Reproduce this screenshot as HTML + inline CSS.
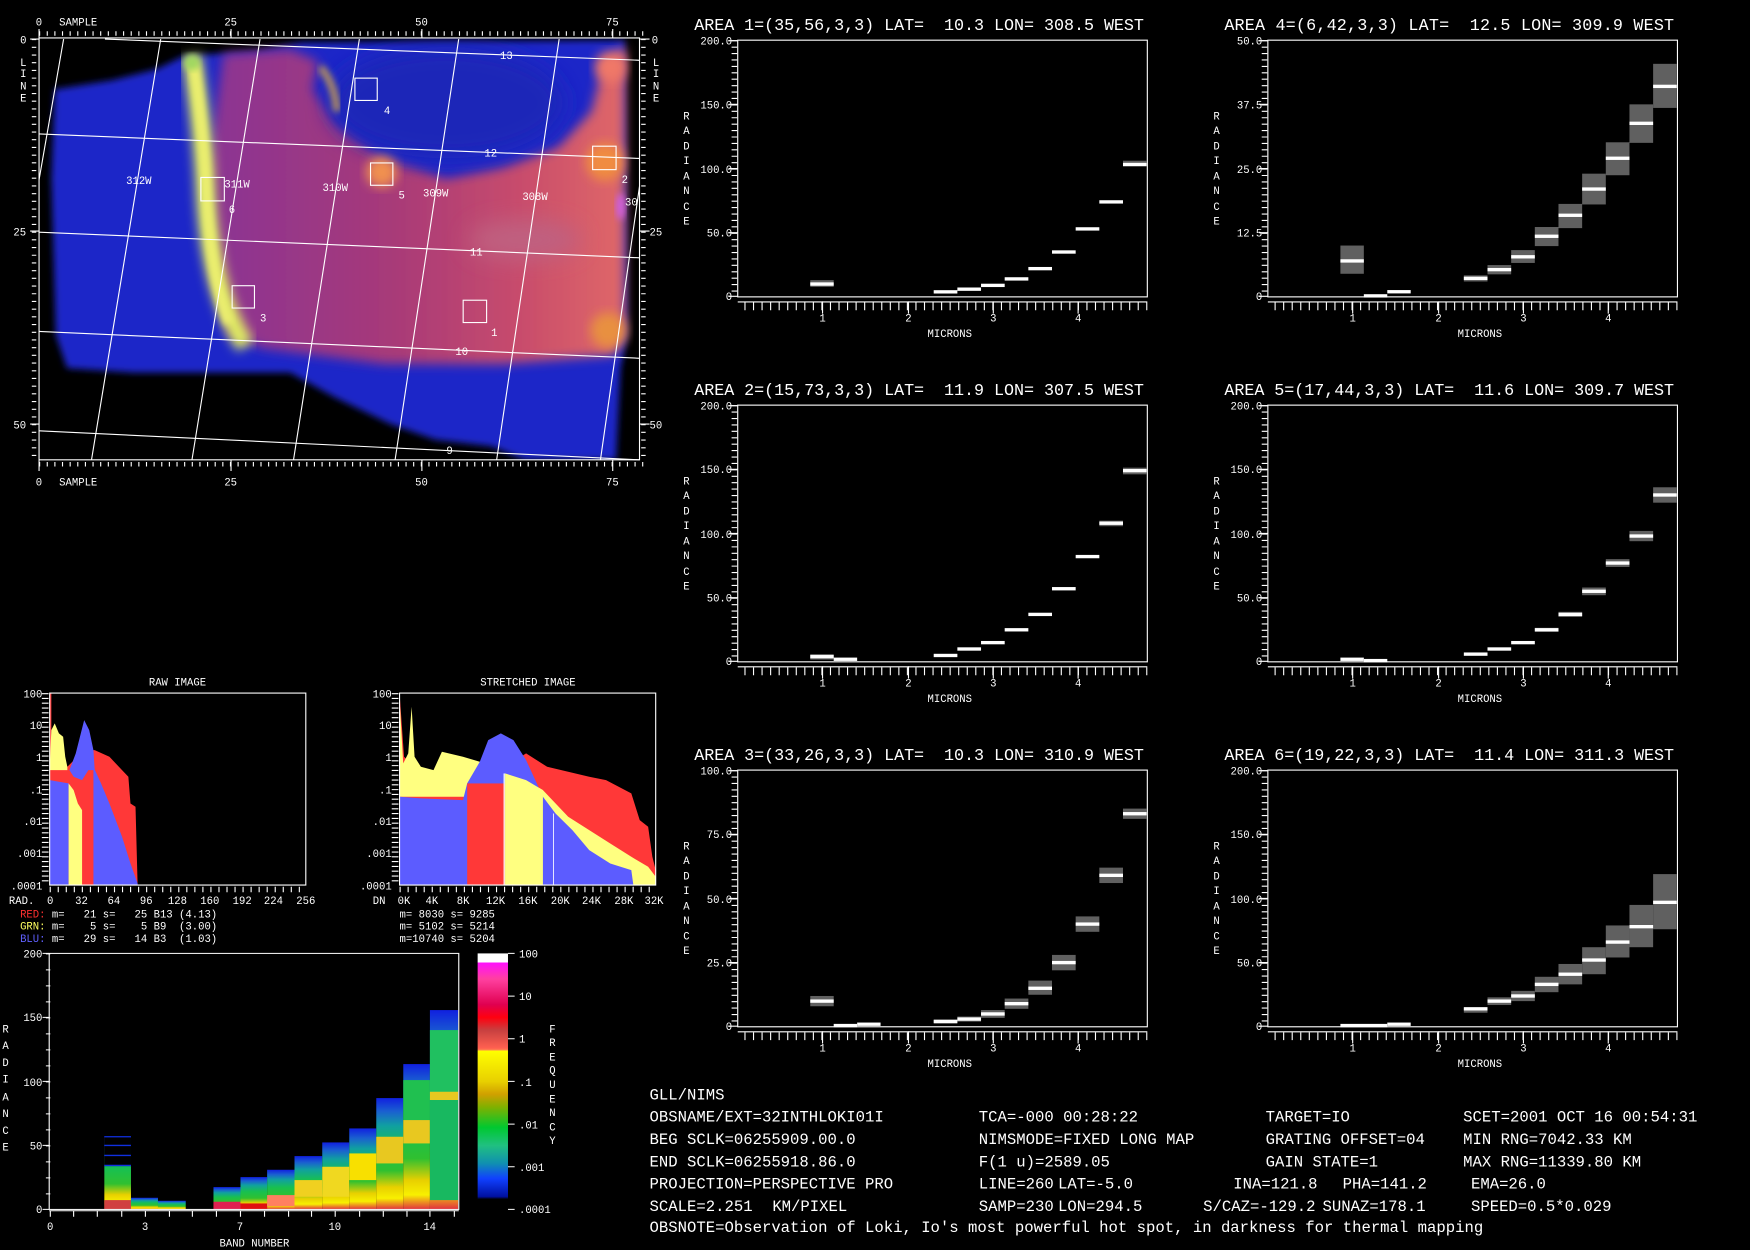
<!DOCTYPE html>
<html><head><meta charset="utf-8"><style>
html,body{margin:0;padding:0;background:#000;width:1750px;height:1250px;overflow:hidden}
svg{display:block}
text{font-family:"Liberation Mono",monospace;fill:#fff;white-space:pre}
</style></head><body>
<svg width="1750" height="1250" viewBox="0 0 1568 1120" xmlns="http://www.w3.org/2000/svg" xml:space="preserve">
<defs>
<filter id="b3" x="-20%" y="-20%" width="140%" height="140%"><feGaussianBlur stdDeviation="3"/></filter>
<filter id="b5" x="-20%" y="-20%" width="140%" height="140%"><feGaussianBlur stdDeviation="5"/></filter>
<filter id="b10" x="-50%" y="-50%" width="200%" height="200%"><feGaussianBlur stdDeviation="10"/></filter>
<clipPath id="mapclip"><rect x="35" y="34" width="538" height="378"/></clipPath>
<linearGradient id="pinkg" x1="0" x2="1" y1="0" y2="0">
<stop offset="0" stop-color="#8a3494"/><stop offset="0.45" stop-color="#a83a78"/><stop offset="0.75" stop-color="#c84c6c"/><stop offset="1" stop-color="#e06868"/></linearGradient>
<linearGradient id="colg" x1="0" x2="0" y1="0" y2="1">
<stop offset="0" stop-color="#1020e0"/><stop offset="0.12" stop-color="#1a60d0"/><stop offset="0.25" stop-color="#10a0a0"/>
<stop offset="0.45" stop-color="#18c050"/><stop offset="0.65" stop-color="#30c030"/><stop offset="0.8" stop-color="#e8d000"/>
<stop offset="0.9" stop-color="#f8f000"/><stop offset="1" stop-color="#e03040"/></linearGradient>
<linearGradient id="barg" x1="0" x2="0" y1="0" y2="1">
<stop offset="0" stop-color="#ffffff"/><stop offset="0.035" stop-color="#ffffff"/><stop offset="0.035" stop-color="#ff10ff"/>
<stop offset="0.1" stop-color="#ff40a0"/><stop offset="0.2" stop-color="#e00050"/><stop offset="0.25" stop-color="#ff0010"/>
<stop offset="0.3" stop-color="#c84040"/><stop offset="0.37" stop-color="#ff6050"/><stop offset="0.38" stop-color="#ff9050"/>
<stop offset="0.38" stop-color="#ffff00"/><stop offset="0.5" stop-color="#e8d000"/><stop offset="0.55" stop-color="#d0a000"/>
<stop offset="0.6" stop-color="#80b000"/><stop offset="0.68" stop-color="#00c830"/><stop offset="0.75" stop-color="#20c080"/>
<stop offset="0.82" stop-color="#1090b0"/><stop offset="0.88" stop-color="#1040ff"/><stop offset="0.95" stop-color="#0010a0"/>
<stop offset="0.96" stop-color="#000000"/><stop offset="1" stop-color="#000000"/></linearGradient>
<g id="axes">
<rect x="0" y="0" width="367" height="230" fill="none" stroke="#fff" stroke-width="1"/>
<line x1="0" y1="234.5" x2="367" y2="234.5" stroke="#fff"/>
<line x1="0" y1="238.5" x2="367" y2="238.5" stroke="#fff" stroke-width="7" stroke-dasharray="1 6.66" stroke-dashoffset="-6"/>
<path d="M76,234v11M153,234v11M229,234v11M305,234v11" stroke="#fff"/>
<line x1="-3" y1="0" x2="-3" y2="230" stroke="#fff" stroke-width="5" stroke-dasharray="1 4.75"/>
<path d="M-8,0.5h8M-8,57.5h8M-8,115h8M-8,172.5h8M-8,229.5h8" stroke="#fff"/>
</g>
</defs>
<rect width="1568" height="1120" fill="#000"/>

<!-- MAP -->
<g clip-path="url(#mapclip)">
<polygon points="49,80 100,72 140,62 165,50 230,46 270,38 560,36 562,300 556,330 552,412 470,412 440,400 390,394 350,380 300,356 260,334 200,334 120,334 60,330 50,300 46,160" fill="#1a26c8" filter="url(#b3)"/>
<polygon points="200,48 260,44 285,55 280,80 300,110 340,140 400,160 450,150 500,132 530,100 540,60 560,40 560,300 550,318 450,326 344,326 235,312 205,300 192,250 186,150" fill="url(#pinkg)" filter="url(#b5)"/>
<ellipse cx="400" cy="92" rx="105" ry="50" fill="#1c28b8" filter="url(#b10)"/>
<ellipse cx="470" cy="215" rx="50" ry="18" fill="#c06080" filter="url(#b10)"/>
<path d="M172,50 Q182,120 184,170 Q188,260 220,310" stroke="#e0ee60" stroke-width="17" fill="none" filter="url(#b5)"/>
<path d="M174,60 Q183,120 185,170 Q189,250 205,290" stroke="#eef070" stroke-width="8" fill="none" filter="url(#b3)"/>
<circle cx="172" cy="56" r="7" fill="#a0d860" filter="url(#b3)"/>
<circle cx="342" cy="154" r="14" fill="#f09050" filter="url(#b5)"/>
<circle cx="542" cy="145" r="17" fill="#f08c40" filter="url(#b5)"/>
<circle cx="545" cy="296" r="16" fill="#e89040" filter="url(#b5)"/>
<circle cx="547" cy="60" r="14" fill="#f07868" filter="url(#b5)"/>
<ellipse cx="556" cy="185" rx="4" ry="12" fill="#d060e0" filter="url(#b3)"/>
<path d="M287,60 Q300,75 302,100" stroke="#b08c60" stroke-width="7" fill="none" filter="url(#b3)"/>
</g>
<g stroke="#fff" stroke-width="1" fill="none">
<rect x="35" y="34" width="538" height="378"/>
<line x1="94" y1="35" x2="573" y2="54"/>
<line x1="35" y1="120" x2="573" y2="142"/>
<line x1="35" y1="208" x2="573" y2="231"/>
<line x1="35" y1="297" x2="573" y2="321"/>
<line x1="35" y1="386" x2="573" y2="412"/>
<line x1="57" y1="35" x2="35" y2="161"/>
<line x1="144" y1="35" x2="82" y2="412"/>
<line x1="233" y1="35" x2="172" y2="412"/>
<line x1="322" y1="35" x2="263" y2="412"/>
<line x1="411" y1="35" x2="354" y2="412"/>
<line x1="501" y1="35" x2="445" y2="412"/>
<line x1="573" y1="167" x2="538" y2="412"/>
<rect x="318" y="70" width="20" height="20"/>
<rect x="332" y="146" width="20" height="20"/>
<rect x="180" y="159" width="21" height="21"/>
<rect x="531" y="131" width="21" height="21"/>
<rect x="208" y="256" width="20" height="20"/>
<rect x="415" y="269" width="21" height="20"/>
<line x1="35" y1="30" x2="580" y2="30" stroke-width="4" stroke-dasharray="1 5.84"/>
<line x1="35" y1="416" x2="580" y2="416" stroke-width="4" stroke-dasharray="1 5.84"/>
<line x1="30.5" y1="35" x2="30.5" y2="412" stroke-width="4" stroke-dasharray="1 5.9"/>
<line x1="576.5" y1="35" x2="576.5" y2="412" stroke-width="4" stroke-dasharray="1 5.9"/>
<path d="M35,26v8M207,26v8M378,26v8M549,26v8M35,412v10M207,412v10M378,412v10M549,412v10M27,35h8M27,207h8M27,380h8M573,35h9M573,207h9M573,380h9"/>
</g>
<g font-size="9.5">
<text x="32" y="23">0</text><text x="53" y="23">SAMPLE</text>
<text x="201" y="23">25</text><text x="372" y="23">50</text><text x="543" y="23">75</text>
<text x="32" y="435">0</text><text x="53" y="435">SAMPLE</text>
<text x="201" y="435">25</text><text x="372" y="435">50</text><text x="543" y="435">75</text>
<text x="18" y="39">0</text><text x="12" y="211">25</text><text x="12" y="384">50</text>
<text x="18" y="59">L</text><text x="18" y="69">I</text><text x="18" y="80">N</text><text x="18" y="91">E</text>
<text x="584" y="39">0</text><text x="582" y="211">25</text><text x="582" y="384">50</text>
<text x="585" y="59">L</text><text x="585" y="69">I</text><text x="585" y="80">N</text><text x="585" y="91">E</text>
<text x="448" y="53">13</text><text x="434" y="140">12</text><text x="421" y="229">11</text><text x="408" y="318">10</text><text x="400" y="407">9</text>
<text x="113" y="165">312W</text><text x="201" y="168">311W</text><text x="289" y="171">310W</text><text x="379" y="176">309W</text><text x="468" y="179">308W</text><text x="560" y="184">30</text>
<text x="344" y="102">4</text><text x="357" y="178">5</text><text x="205" y="191">6</text><text x="557" y="164">2</text><text x="233" y="288">3</text><text x="440" y="301">1</text>
</g>

<!-- plot 1 -->
<g transform="translate(661,36)">
<use href="#axes"/>
<text x="-39" y="-9" font-size="15" textLength="403">AREA 1=(35,56,3,3) LAT=  10.3 LON= 308.5 WEST</text>
<g font-size="9.5" text-anchor="end"><text x="-5" y="4">200.0</text><text x="-5" y="61">150.0</text><text x="-5" y="119">100.0</text><text x="-5" y="176">50.0</text><text x="-5" y="233">0</text></g>
<g font-size="9.5" text-anchor="middle"><text x="76" y="252">1</text><text x="153" y="252">2</text><text x="229" y="252">3</text><text x="305" y="252">4</text><text x="190" y="266">MICRONS</text>
<text x="-46" y="71">R</text><text x="-46" y="84">A</text><text x="-46" y="98">D</text><text x="-46" y="111">I</text><text x="-46" y="125">A</text><text x="-46" y="138">N</text><text x="-46" y="152">C</text><text x="-46" y="165">E</text></g>
<g fill="#606060"><rect x="65" y="215" width="21" height="6"/><rect x="345.2" y="108" width="21.2" height="5"/></g>
<g fill="#fff"><rect x="65" y="217" width="21" height="3"/><rect x="175.6" y="224" width="21.2" height="3"/><rect x="196.8" y="221.6" width="21.2" height="3"/><rect x="218" y="218.2" width="21.2" height="3"/><rect x="239.2" y="212.4" width="21.2" height="3"/><rect x="260.4" y="203.2" width="21.2" height="3"/><rect x="281.6" y="188.3" width="21.2" height="3"/><rect x="302.8" y="167.6" width="21.2" height="3"/><rect x="324" y="143.4" width="21.2" height="3"/><rect x="345.2" y="109.9" width="21.2" height="3"/></g>
</g>
<!-- plot 2 -->
<g transform="translate(661,363)">
<use href="#axes"/>
<text x="-39" y="-9" font-size="15" textLength="403">AREA 2=(15,73,3,3) LAT=  11.9 LON= 307.5 WEST</text>
<g font-size="9.5" text-anchor="end"><text x="-5" y="4">200.0</text><text x="-5" y="61">150.0</text><text x="-5" y="119">100.0</text><text x="-5" y="176">50.0</text><text x="-5" y="233">0</text></g>
<g font-size="9.5" text-anchor="middle"><text x="76" y="252">1</text><text x="153" y="252">2</text><text x="229" y="252">3</text><text x="305" y="252">4</text><text x="190" y="266">MICRONS</text>
<text x="-46" y="71">R</text><text x="-46" y="84">A</text><text x="-46" y="98">D</text><text x="-46" y="111">I</text><text x="-46" y="125">A</text><text x="-46" y="138">N</text><text x="-46" y="152">C</text><text x="-46" y="165">E</text></g>
<g fill="#606060"><rect x="65" y="223" width="21" height="5"/><rect x="324" y="103.5" width="21.2" height="5"/><rect x="345.2" y="56" width="21.2" height="6"/></g>
<g fill="#fff"><rect x="65" y="223.9" width="21" height="3"/><rect x="86" y="226.2" width="21" height="3"/><rect x="175.6" y="222.8" width="21.2" height="3"/><rect x="196.8" y="217" width="21.2" height="3"/><rect x="218" y="211.3" width="21.2" height="3"/><rect x="239.2" y="199.8" width="21.2" height="3"/><rect x="260.4" y="186" width="21.2" height="3"/><rect x="281.6" y="163" width="21.2" height="3"/><rect x="302.8" y="134.2" width="21.2" height="3"/><rect x="324" y="104.3" width="21.2" height="3"/><rect x="345.2" y="57.2" width="21.2" height="3"/></g>
</g>
<!-- plot 3 -->
<g transform="translate(661,690)">
<use href="#axes"/>
<text x="-39" y="-9" font-size="15" textLength="403">AREA 3=(33,26,3,3) LAT=  10.3 LON= 310.9 WEST</text>
<g font-size="9.5" text-anchor="end"><text x="-5" y="4">100.0</text><text x="-5" y="61">75.0</text><text x="-5" y="119">50.0</text><text x="-5" y="176">25.0</text><text x="-5" y="233">0</text></g>
<g font-size="9.5" text-anchor="middle"><text x="76" y="252">1</text><text x="153" y="252">2</text><text x="229" y="252">3</text><text x="305" y="252">4</text><text x="190" y="266">MICRONS</text>
<text x="-46" y="71">R</text><text x="-46" y="84">A</text><text x="-46" y="98">D</text><text x="-46" y="111">I</text><text x="-46" y="125">A</text><text x="-46" y="138">N</text><text x="-46" y="152">C</text><text x="-46" y="165">E</text></g>
<g fill="#606060"><rect x="65" y="202.4" width="21" height="9.2"/><rect x="175.6" y="223.1" width="21.2" height="3.5"/><rect x="196.8" y="220.8" width="21.2" height="4.6"/><rect x="218" y="215" width="21.2" height="7"/><rect x="239.2" y="204.7" width="21.2" height="9.2"/><rect x="260.4" y="188.6" width="21.2" height="12.7"/><rect x="281.6" y="165.6" width="21.2" height="13.8"/><rect x="302.8" y="131.1" width="21.2" height="13.8"/><rect x="324" y="87.4" width="21.2" height="13.8"/><rect x="345.2" y="34.5" width="21.2" height="9.2"/></g>
<g fill="#fff"><rect x="65" y="205.5" width="21" height="3"/><rect x="86" y="227.4" width="21" height="3"/><rect x="107" y="226.2" width="21" height="3"/><rect x="175.6" y="223.9" width="21.2" height="3"/><rect x="196.8" y="221.6" width="21.2" height="3"/><rect x="218" y="217" width="21.2" height="3"/><rect x="239.2" y="207.8" width="21.2" height="3"/><rect x="260.4" y="194" width="21.2" height="3"/><rect x="281.6" y="171" width="21.2" height="3"/><rect x="302.8" y="136.5" width="21.2" height="3"/><rect x="324" y="92.8" width="21.2" height="3"/><rect x="345.2" y="37.6" width="21.2" height="3"/></g>
</g>
<!-- plot 4 -->
<g transform="translate(1136,36)">
<use href="#axes"/>
<text x="-39" y="-9" font-size="15" textLength="403">AREA 4=(6,42,3,3) LAT=  12.5 LON= 309.9 WEST</text>
<g font-size="9.5" text-anchor="end"><text x="-5" y="4">50.0</text><text x="-5" y="61">37.5</text><text x="-5" y="119">25.0</text><text x="-5" y="176">12.5</text><text x="-5" y="233">0</text></g>
<g font-size="9.5" text-anchor="middle"><text x="76" y="252">1</text><text x="153" y="252">2</text><text x="229" y="252">3</text><text x="305" y="252">4</text><text x="190" y="266">MICRONS</text>
<text x="-46" y="71">R</text><text x="-46" y="84">A</text><text x="-46" y="98">D</text><text x="-46" y="111">I</text><text x="-46" y="125">A</text><text x="-46" y="138">N</text><text x="-46" y="152">C</text><text x="-46" y="165">E</text></g>
<g fill="#606060"><rect x="65" y="184" width="21" height="25.3"/><rect x="175.6" y="210.7" width="21.2" height="5.5"/><rect x="196.8" y="201.5" width="21.2" height="8.3"/><rect x="218" y="188.1" width="21.2" height="11.5"/><rect x="239.2" y="167.4" width="21.2" height="17.1"/><rect x="260.4" y="146.7" width="21.2" height="21.7"/><rect x="281.6" y="119.6" width="21.2" height="27.6"/><rect x="302.8" y="91.5" width="21.2" height="29.5"/><rect x="324" y="57.5" width="21.2" height="34.5"/><rect x="345.2" y="21.2" width="21.2" height="39.5"/></g>
<g fill="#fff"><rect x="65" y="196.3" width="21" height="3"/><rect x="86" y="227.6" width="21" height="3"/><rect x="107" y="223.9" width="21" height="3"/><rect x="175.6" y="211.9" width="21.2" height="3"/><rect x="196.8" y="204.1" width="21.2" height="3"/><rect x="218" y="192.6" width="21.2" height="3"/><rect x="239.2" y="174.2" width="21.2" height="3"/><rect x="260.4" y="155.4" width="21.2" height="3"/><rect x="281.6" y="131.9" width="21.2" height="3"/><rect x="302.8" y="104.3" width="21.2" height="3"/><rect x="324" y="73" width="21.2" height="3"/><rect x="345.2" y="39.9" width="21.2" height="3"/></g>
</g>
<!-- plot 5 -->
<g transform="translate(1136,363)">
<use href="#axes"/>
<text x="-39" y="-9" font-size="15" textLength="403">AREA 5=(17,44,3,3) LAT=  11.6 LON= 309.7 WEST</text>
<g font-size="9.5" text-anchor="end"><text x="-5" y="4">200.0</text><text x="-5" y="61">150.0</text><text x="-5" y="119">100.0</text><text x="-5" y="176">50.0</text><text x="-5" y="233">0</text></g>
<g font-size="9.5" text-anchor="middle"><text x="76" y="252">1</text><text x="153" y="252">2</text><text x="229" y="252">3</text><text x="305" y="252">4</text><text x="190" y="266">MICRONS</text>
<text x="-46" y="71">R</text><text x="-46" y="84">A</text><text x="-46" y="98">D</text><text x="-46" y="111">I</text><text x="-46" y="125">A</text><text x="-46" y="138">N</text><text x="-46" y="152">C</text><text x="-46" y="165">E</text></g>
<g fill="#606060"><rect x="239.2" y="199.5" width="21.2" height="3.6"/><rect x="260.4" y="185.2" width="21.2" height="4.6"/><rect x="281.6" y="163.4" width="21.2" height="6.9"/><rect x="302.8" y="138" width="21.2" height="7"/><rect x="324" y="112.7" width="21.2" height="9.2"/><rect x="345.2" y="73.6" width="21.2" height="13.8"/></g>
<g fill="#fff"><rect x="65" y="226.2" width="21" height="3"/><rect x="86" y="227.4" width="21" height="3"/><rect x="175.6" y="221.6" width="21.2" height="3"/><rect x="196.8" y="217" width="21.2" height="3"/><rect x="218" y="211.3" width="21.2" height="3"/><rect x="239.2" y="199.8" width="21.2" height="3"/><rect x="260.4" y="186" width="21.2" height="3"/><rect x="281.6" y="165.3" width="21.2" height="3"/><rect x="302.8" y="140" width="21.2" height="3"/><rect x="324" y="115.8" width="21.2" height="3"/><rect x="345.2" y="79" width="21.2" height="3"/></g>
</g>
<!-- plot 6 -->
<g transform="translate(1136,690)">
<use href="#axes"/>
<text x="-39" y="-9" font-size="15" textLength="403">AREA 6=(19,22,3,3) LAT=  11.4 LON= 311.3 WEST</text>
<g font-size="9.5" text-anchor="end"><text x="-5" y="4">200.0</text><text x="-5" y="61">150.0</text><text x="-5" y="119">100.0</text><text x="-5" y="176">50.0</text><text x="-5" y="233">0</text></g>
<g font-size="9.5" text-anchor="middle"><text x="76" y="252">1</text><text x="153" y="252">2</text><text x="229" y="252">3</text><text x="305" y="252">4</text><text x="190" y="266">MICRONS</text>
<text x="-46" y="71">R</text><text x="-46" y="84">A</text><text x="-46" y="98">D</text><text x="-46" y="111">I</text><text x="-46" y="125">A</text><text x="-46" y="138">N</text><text x="-46" y="152">C</text><text x="-46" y="165">E</text></g>
<g fill="#606060"><rect x="175.6" y="212.8" width="21.2" height="4.6"/><rect x="196.8" y="203.6" width="21.2" height="6.9"/><rect x="218" y="197.8" width="21.2" height="9.2"/><rect x="239.2" y="185.2" width="21.2" height="13.8"/><rect x="260.4" y="173.7" width="21.2" height="18.3"/><rect x="281.6" y="158.7" width="21.2" height="24.2"/><rect x="302.8" y="139.2" width="21.2" height="28.7"/><rect x="324" y="120.8" width="21.2" height="37.9"/><rect x="345.2" y="93.2" width="21.2" height="49.4"/></g>
<g fill="#fff"><rect x="65" y="227.4" width="42" height="3"/><rect x="107" y="226.2" width="21" height="3"/><rect x="175.6" y="212.4" width="21.2" height="3"/><rect x="196.8" y="205.5" width="21.2" height="3"/><rect x="218" y="200.9" width="21.2" height="3"/><rect x="239.2" y="190.5" width="21.2" height="3"/><rect x="260.4" y="181.4" width="21.2" height="3"/><rect x="281.6" y="168.7" width="21.2" height="3"/><rect x="302.8" y="152.6" width="21.2" height="3"/><rect x="324" y="138.8" width="21.2" height="3"/><rect x="345.2" y="117" width="21.2" height="3"/></g>
</g>

<!-- HISTOGRAMS -->
<g transform="translate(0,600.4) scale(0.3771,0.2987)">
<polygon points="118,70 122,70 122,240 160,290 200,240 225,240 260,260 290,300 305,320 310,400 322,410 327,646 118,646" fill="#ff3838"/>
<polygon points="118,290 122,180 130,160 140,190 150,200 155,260 160,290 160,300 118,300" fill="#ffff80"/>
<polygon points="118,330 163,340 163,646 118,646" fill="#5c5cff"/>
<polygon points="163,340 175,360 185,400 195,420 195,646 163,646" fill="#ffff80"/>
<polygon points="165,300 180,250 200,150 212,180 222,240 225,300 210,300 195,330 175,320" fill="#5c5cff"/>
<polygon points="222,290 240,340 260,400 290,500 310,580 327,640 327,646 222,646" fill="#5c5cff"/>
<polygon points="950,80 960,260 1000,310 1050,330 1100,340 1140,300 1200,290 1250,250 1300,290 1400,320 1440,330 1500,370 1520,450 1540,470 1550,560 1558,600 1558,646 950,646" fill="#ff3838"/>
<polygon points="950,100 958,280 970,250 978,110 985,260 1000,290 1030,300 1050,245 1100,260 1140,275 1190,280 1250,330 1290,360 1350,440 1400,480 1450,520 1500,560 1540,590 1558,620 1558,646 1290,646 1290,380 950,380" fill="#ffff80"/>
<polygon points="950,380 1000,385 1100,390 1110,340 1140,275 1160,210 1190,190 1220,210 1250,270 1290,380 1320,430 1360,480 1400,540 1450,580 1500,600 1505,646 950,646" fill="#5c5cff"/>
<rect x="1110" y="340" width="90" height="306" fill="#ff3838"/>
<polygon points="1200,310 1250,330 1290,360 1290,646 1200,646" fill="#ffff80"/>
<line x1="1198" y1="310" x2="1198" y2="646" stroke="#fff" stroke-width="3"/>
<line x1="1315" y1="430" x2="1315" y2="646" stroke="#fff" stroke-width="2"/>
</g>
<g stroke="#fff" fill="none">
<rect x="44.5" y="621" width="229.5" height="172"/>
<rect x="358" y="621" width="229.5" height="172"/>
<line x1="44.5" y1="797" x2="274" y2="797" stroke-width="5" stroke-dasharray="1 6.2"/>
<line x1="358" y1="797" x2="588" y2="797" stroke-width="5" stroke-dasharray="1 6.2"/>
<line x1="40.5" y1="621" x2="40.5" y2="793" stroke-width="6" stroke-dasharray="1 3.3"/>
<line x1="354" y1="621" x2="354" y2="793" stroke-width="6" stroke-dasharray="1 3.3"/>
</g>
<g font-size="9.5">
<text x="159" y="614" text-anchor="middle">RAW IMAGE</text>
<text x="473" y="614" text-anchor="middle">STRETCHED IMAGE</text>
<g text-anchor="end"><text x="38" y="625">100</text><text x="38" y="653">10</text><text x="38" y="682">1</text><text x="38" y="711">.1</text><text x="38" y="739">.01</text><text x="38" y="768">.001</text><text x="38" y="797">.0001</text>
<text x="351" y="625">100</text><text x="351" y="653">10</text><text x="351" y="682">1</text><text x="351" y="711">.1</text><text x="351" y="739">.01</text><text x="351" y="768">.001</text><text x="351" y="797">.0001</text></g>
<text x="8" y="810">RAD.</text>
<g text-anchor="middle"><text x="45" y="810">0</text><text x="73" y="810">32</text><text x="102" y="810">64</text><text x="131" y="810">96</text><text x="159" y="810">128</text><text x="188" y="810">160</text><text x="217" y="810">192</text><text x="245" y="810">224</text><text x="274" y="810">256</text>
<text x="362" y="810">0K</text><text x="387" y="810">4K</text><text x="415" y="810">8K</text><text x="444" y="810">12K</text><text x="473" y="810">16K</text><text x="502" y="810">20K</text><text x="530" y="810">24K</text><text x="559" y="810">28K</text><text x="586" y="810">32K</text></g>
<text x="334" y="810">DN</text>
<text x="18" y="822"><tspan fill="#ff3030">RED:</tspan> m=   21 s=   25 B13 (4.13)</text>
<text x="18" y="833"><tspan fill="#ffff60">GRN:</tspan> m=    5 s=    5 B9  (3.00)</text>
<text x="18" y="844"><tspan fill="#6060ff">BLU:</tspan> m=   29 s=   14 B3  (1.03)</text>
<text x="358" y="822">m= 8030 s= 9285</text>
<text x="358" y="833">m= 5102 s= 5214</text>
<text x="358" y="844">m=10740 s= 5204</text>
</g>

<!-- BAND CHART -->
<g transform="translate(0,842.3) scale(0.3315,0.2987)">
<rect x="282" y="588" width="72" height="220" fill="url(#colg)"/>
<rect x="282" y="588" width="72" height="90" fill="#000"/>
<path d="M282,590h72M282,616h72M282,646h72M282,676h72" stroke="#1030e0" stroke-width="4"/>
<rect x="282" y="780" width="72" height="28" fill="#d04040"/>
<rect x="354" y="773" width="73" height="35" fill="url(#colg)"/>
<rect x="427" y="782" width="75" height="26" fill="url(#colg)"/>
<rect x="577" y="741" width="73" height="67" fill="url(#colg)"/>
<rect x="577" y="785" width="73" height="23" fill="#e02050"/>
<rect x="650" y="711" width="72" height="97" fill="url(#colg)"/>
<rect x="650" y="790" width="72" height="18" fill="#e01010"/>
<rect x="722" y="689" width="74" height="119" fill="url(#colg)"/>
<rect x="722" y="765" width="74" height="33" fill="#ff8060"/>
<rect x="796" y="648" width="75" height="160" fill="url(#colg)"/>
<rect x="796" y="720" width="75" height="50" fill="#f0d020"/>
<rect x="871" y="607" width="73" height="201" fill="url(#colg)"/>
<rect x="871" y="680" width="73" height="90" fill="#f0d820"/>
<rect x="944" y="565" width="73" height="243" fill="url(#colg)"/>
<rect x="944" y="640" width="73" height="80" fill="#f8e000"/>
<rect x="1017" y="474" width="73" height="334" fill="url(#colg)"/>
<rect x="1017" y="590" width="73" height="80" fill="#e8c820"/>
<rect x="1090" y="372" width="72" height="436" fill="url(#colg)"/>
<rect x="1090" y="420" width="72" height="120" fill="#20c050"/>
<rect x="1090" y="540" width="72" height="70" fill="#e8c820"/>
<rect x="1162" y="210" width="76" height="598" fill="url(#colg)"/>
<rect x="1162" y="270" width="76" height="190" fill="#20c060"/>
<rect x="1162" y="455" width="76" height="25" fill="#e8c820"/>
<rect x="1162" y="480" width="76" height="300" fill="#18b860"/>
<rect x="1291" y="40" width="82" height="768" fill="url(#barg)"/>
<rect x="133" y="40" width="1107" height="768" fill="none" stroke="#fff" stroke-width="3"/>
<line x1="133" y1="812" x2="1240" y2="812" stroke="#fff" stroke-width="3"/>
<path d="M136,812v18M199,812v18M263,812v18M329,812v18M393,812v18M458,812v18M520,812v18M585,812v18M650,812v18M715,812v18M780,812v18M842,812v18M906,812v18M972,812v18M1036,812v18M1100,812v18M1162,812v18M1228,812v18" stroke="#fff" stroke-width="3"/>
<line x1="130" y1="40" x2="130" y2="808" stroke="#fff" stroke-width="12" stroke-dasharray="3 45"/>
<path d="M115,40h18M115,232h18M115,424h18M115,616h18M115,808h18M1373,40h18M1373,168h18M1373,296h18M1373,424h18M1373,552h18M1373,680h18M1373,808h18" stroke="#fff" stroke-width="3"/>
</g>
<g font-size="9.5">
<g text-anchor="end"><text x="38" y="858">200</text><text x="38" y="915">150</text><text x="38" y="973">100</text><text x="38" y="1030">50</text><text x="38" y="1087">0</text></g>
<g text-anchor="middle"><text x="45" y="1102">0</text><text x="130" y="1102">3</text><text x="215" y="1102">7</text><text x="300" y="1102">10</text><text x="385" y="1102">14</text><text x="228" y="1117">BAND NUMBER</text>
<text x="5" y="925">R</text><text x="5" y="940">A</text><text x="5" y="955">D</text><text x="5" y="970">I</text><text x="5" y="986">A</text><text x="5" y="1001">N</text><text x="5" y="1016">C</text><text x="5" y="1031">E</text>
<text x="495" y="925">F</text><text x="495" y="937">R</text><text x="495" y="950">E</text><text x="495" y="962">Q</text><text x="495" y="975">U</text><text x="495" y="988">E</text><text x="495" y="1000">N</text><text x="495" y="1013">C</text><text x="495" y="1025">Y</text></g>
<text x="465" y="858">100</text><text x="465" y="896">10</text><text x="465" y="934">1</text><text x="465" y="973">.1</text><text x="465" y="1011">.01</text><text x="465" y="1049">.001</text><text x="465" y="1087">.0001</text>
</g>

<!-- BOTTOM TEXT -->
<g font-size="14">
<text x="582" y="985">GLL/NIMS</text>
<text x="582" y="1005">OBSNAME/EXT=32INTHLOKI01I</text><text x="877" y="1005">TCA=-000 00:28:22</text><text x="1134" y="1005">TARGET=IO</text><text x="1311" y="1005">SCET=2001 OCT 16 00:54:31</text>
<text x="582" y="1025">BEG SCLK=06255909.00.0</text><text x="877" y="1025">NIMSMODE=FIXED LONG MAP</text><text x="1134" y="1025">GRATING OFFSET=04</text><text x="1311" y="1025">MIN RNG=7042.33 KM</text>
<text x="582" y="1045">END SCLK=06255918.86.0</text><text x="877" y="1045">F(1 u)=2589.05</text><text x="1134" y="1045">GAIN STATE=1</text><text x="1311" y="1045">MAX RNG=11339.80 KM</text>
<text x="582" y="1065">PROJECTION=PERSPECTIVE PRO</text><text x="877" y="1065">LINE=260</text><text x="948" y="1065">LAT=-5.0</text><text x="1105" y="1065">INA=121.8</text><text x="1203" y="1065">PHA=141.2</text><text x="1318" y="1065">EMA=26.0</text>
<text x="582" y="1085">SCALE=2.251</text><text x="692" y="1085">KM/PIXEL</text><text x="877" y="1085">SAMP=230</text><text x="948" y="1085">LON=294.5</text><text x="1078" y="1085">S/CAZ=-129.2</text><text x="1185" y="1085">SUNAZ=178.1</text><text x="1318" y="1085">SPEED=0.5*0.029</text>
<text x="582" y="1104">OBSNOTE=Observation of Loki, Io's most powerful hot spot, in darkness for thermal mapping</text>
</g>
</svg>
</body></html>
